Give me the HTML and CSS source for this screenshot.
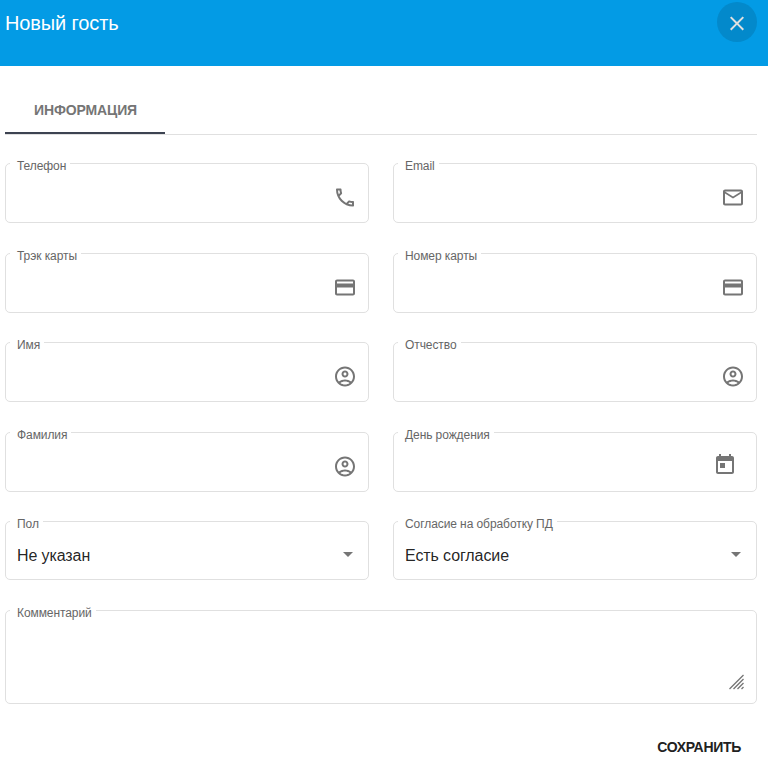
FILE: index.html
```html
<!DOCTYPE html>
<html lang="ru">
<head>
<meta charset="utf-8">
<title>Новый гость</title>
<link rel="stylesheet" href="styles.css">
</head>
<body>
<svg class="sprite" width="0" height="0">
  <symbol id="card" viewBox="0 -.5 24 24"><path d="M20 4H4c-1.11 0-1.99.89-1.99 2L2 18c0 1.11.89 2 2 2h16c1.11 0 2-.89 2-2V6c0-1.11-.89-2-2-2zm0 14H4v-6h16v6zm0-10H4V6h16v2z"/></symbol>
  <symbol id="person" viewBox="0 -.5 24 24"><path d="M12 2C6.48 2 2 6.48 2 12s4.480 10 10 10 10-4.480 10-10S17.520 2 12 2zM7.350 18.500C8.660 17.560 10.260 17 12 17s3.340.560 4.650 1.500C15.340 19.440 13.740 20 12 20s-3.340-.560-4.650-1.500zm10.790-1.380C16.450 15.800 14.320 15 12 15s-4.450.800-6.140 2.120C4.700 15.730 4 13.950 4 12c0-4.420 3.580-8 8-8s8 3.580 8 8c0 1.950-.700 3.730-1.860 5.120zM12 6c-1.930 0-3.500 1.570-3.500 3.500S10.070 13 12 13s3.500-1.570 3.500-3.500S13.930 6 12 6zm0 5c-.830 0-1.500-.670-1.500-1.500S11.170 8 12 8s1.500.670 1.500 1.500S12.830 11 12 11z"/></symbol>
</svg>
<header class="header">
  <h1 class="title">Новый гость</h1>
  <button class="close" aria-label="Закрыть"><svg width="24" height="24" viewBox="0 -.4 24 24"><path d="M19 6.410L17.590 5 12 10.590 6.410 5 5 6.410 10.590 12 5 17.590 6.410 19 12 13.410 17.590 19 19 17.590 13.410 12z"/></svg></button>
</header>
<main class="content">
  <nav class="tabs"><div class="tab"><span>ИНФОРМАЦИЯ</span></div></nav>
  <form class="form">
    <div class="row">
      <div class="field"><label class="label">Телефон</label><svg class="icon" viewBox="0 -.5 24 24"><path d="M6.540 5c.060.890.210 1.760.450 2.590l-1.200 1.200c-.410-1.200-.670-2.470-.760-3.790h1.510m9.860 12.020c.850.240 1.720.390 2.600.450v1.490c-1.320-.090-2.590-.350-3.800-.750l1.200-1.190M7.500 3H4c-.550 0-1 .450-1 1 0 9.390 7.610 17 17 17 .550 0 1-.450 1-1v-3.490c0-.550-.450-1-1-1-1.240 0-2.450-.200-3.570-.570-.100-.040-.210-.050-.310-.050-.260 0-.510.100-.710.290l-2.200 2.200c-2.830-1.450-5.150-3.760-6.590-6.590l2.200-2.200c.280-.280.360-.670.250-1.020C8.700 6.450 8.500 5.250 8.500 4c0-.550-.450-1-1-1z"/></svg></div>
      <div class="field"><label class="label">Email</label><svg class="icon" viewBox="0 -.5 24 24"><path d="M22 6c0-1.100-.900-2-2-2H4c-1.100 0-2 .900-2 2v12c0 1.100.900 2 2 2h16c1.100 0 2-.900 2-2V6zm-2 0l-8 5-8-5h16zm0 12H4V8l8 5 8-5v10z"/></svg></div>
    </div>
    <div class="row short-gap">
      <div class="field"><label class="label">Трэк карты</label><svg class="icon"><use href="#card"/></svg></div>
      <div class="field"><label class="label">Номер карты</label><svg class="icon"><use href="#card"/></svg></div>
    </div>
    <div class="row">
      <div class="field"><label class="label">Имя</label><svg class="icon"><use href="#person"/></svg></div>
      <div class="field"><label class="label">Отчество</label><svg class="icon"><use href="#person"/></svg></div>
    </div>
    <div class="row short-gap">
      <div class="field"><label class="label">Фамилия</label><svg class="icon"><use href="#person"/></svg></div>
      <div class="field date"><label class="label">День рождения</label><svg class="icon" viewBox="0 0 24 24"><path d="M19 3h-1V1h-2v2H8V1H6v2H5c-1.110 0-1.990.900-1.990 2L3 19c0 1.100.890 2 2 2h14c1.100 0 2-.900 2-2V5c0-1.100-.900-2-2-2zm0 16H5V8h14v11zM7 10h5v5H7z"/></svg></div>
    </div>
    <div class="row">
      <div class="field select"><label class="label">Пол</label><span class="value">Не указан</span><i class="arrow"></i></div>
      <div class="field select"><label class="label">Согласие на обработку ПД</label><span class="value">Есть согласие</span><i class="arrow"></i></div>
    </div>
    <div class="field comment"><label class="label">Комментарий</label><svg class="grip" width="15" height="16" viewBox="0 0 15 16"><path d="M.5 15L14.500 1M4.500 15L14.500 5M8.500 15L14.500 9M12.500 15L14.500 13"/></svg></div>
    <div class="actions"><button class="save" type="button">СОХРАНИТЬ</button></div>
  </form>
</main>
</body>
</html>
```
FILE: styles.css
```css
* { box-sizing: border-box; }
body {
  margin: 0;
  background: #fff;
  font-family: "Liberation Sans", Arial, sans-serif;
  color: rgba(0, 0, 0, .87);
}
.sprite { position: absolute; }
button { border: 0; padding: 0; background: none; font-family: inherit; }
.header {
  display: flex;
  justify-content: space-between;
  align-items: flex-start;
  height: 66px;
  padding: 2px 11px 0 5px;
  background: #039be5;
}
.title { margin: 9px 0 0; font-size: 20px; line-height: 24px; font-weight: 400; letter-spacing: -.12px; color: #fff; }
.close {
  display: flex;
  align-items: center;
  justify-content: center;
  width: 40px;
  height: 40px;
  border-radius: 50%;
  background: #0389cb;
}
.close svg { fill: #e0e0e0; margin-top: 2px; }
.content { padding: 20px 11px 0 5px; }
.tabs { display: flex; height: 49px; border-bottom: 1px solid #e0e0e0; }
.tab {
  display: flex;
  align-items: center;
  justify-content: center;
  width: 160px;
  height: 48px;
  padding: 2px 0 0 1px;
  border-bottom: 2px solid #3d4351;
  font-size: 14px;
  font-weight: 700;
  letter-spacing: -.12px;
  color: #757575;
}
.form { padding-top: 28px; }
.row { display: grid; grid-template-columns: 364px 364px; gap: 24px; margin-bottom: 30px; }
.row.short-gap { margin-bottom: 29px; }
.field {
  position: relative;
  display: flex;
  align-items: center;
  justify-content: flex-end;
  height: 60px;
  padding: 8px 11px 0;
  border: 1px solid #e0e0e0;
  border-radius: 5px;
}
.label {
  position: absolute;
  top: -5px;
  left: 4px;
  padding: 0 4px 0 7px;
  background: #fff;
  font-size: 12px;
  line-height: 14px;
  letter-spacing: -.08px;
  color: #666;
  white-space: nowrap;
}
.icon { width: 24px; height: 24px; margin-top: -.5px; fill: #757575; }
.date { padding: 6px 19px 0; }
.select { height: 59px; justify-content: space-between; padding: 9px 15px 0 11px; }
.value { margin-top: 2px; font-size: 16px; line-height: 20px; letter-spacing: -.1px; }
.arrow { border: 5px solid transparent; border-top-color: #757575; border-bottom: 0; margin-top: -2px; }
.comment { height: 94px; align-items: flex-end; padding: 0 12px 13px; }
.grip { stroke: #757575; stroke-width: 1.3; fill: none; }
.actions { display: flex; justify-content: flex-end; padding: 34px 16px 0 0; }
.save { font-size: 14px; line-height: 18px; font-weight: 700; letter-spacing: -.3px; color: #212121; }
```
